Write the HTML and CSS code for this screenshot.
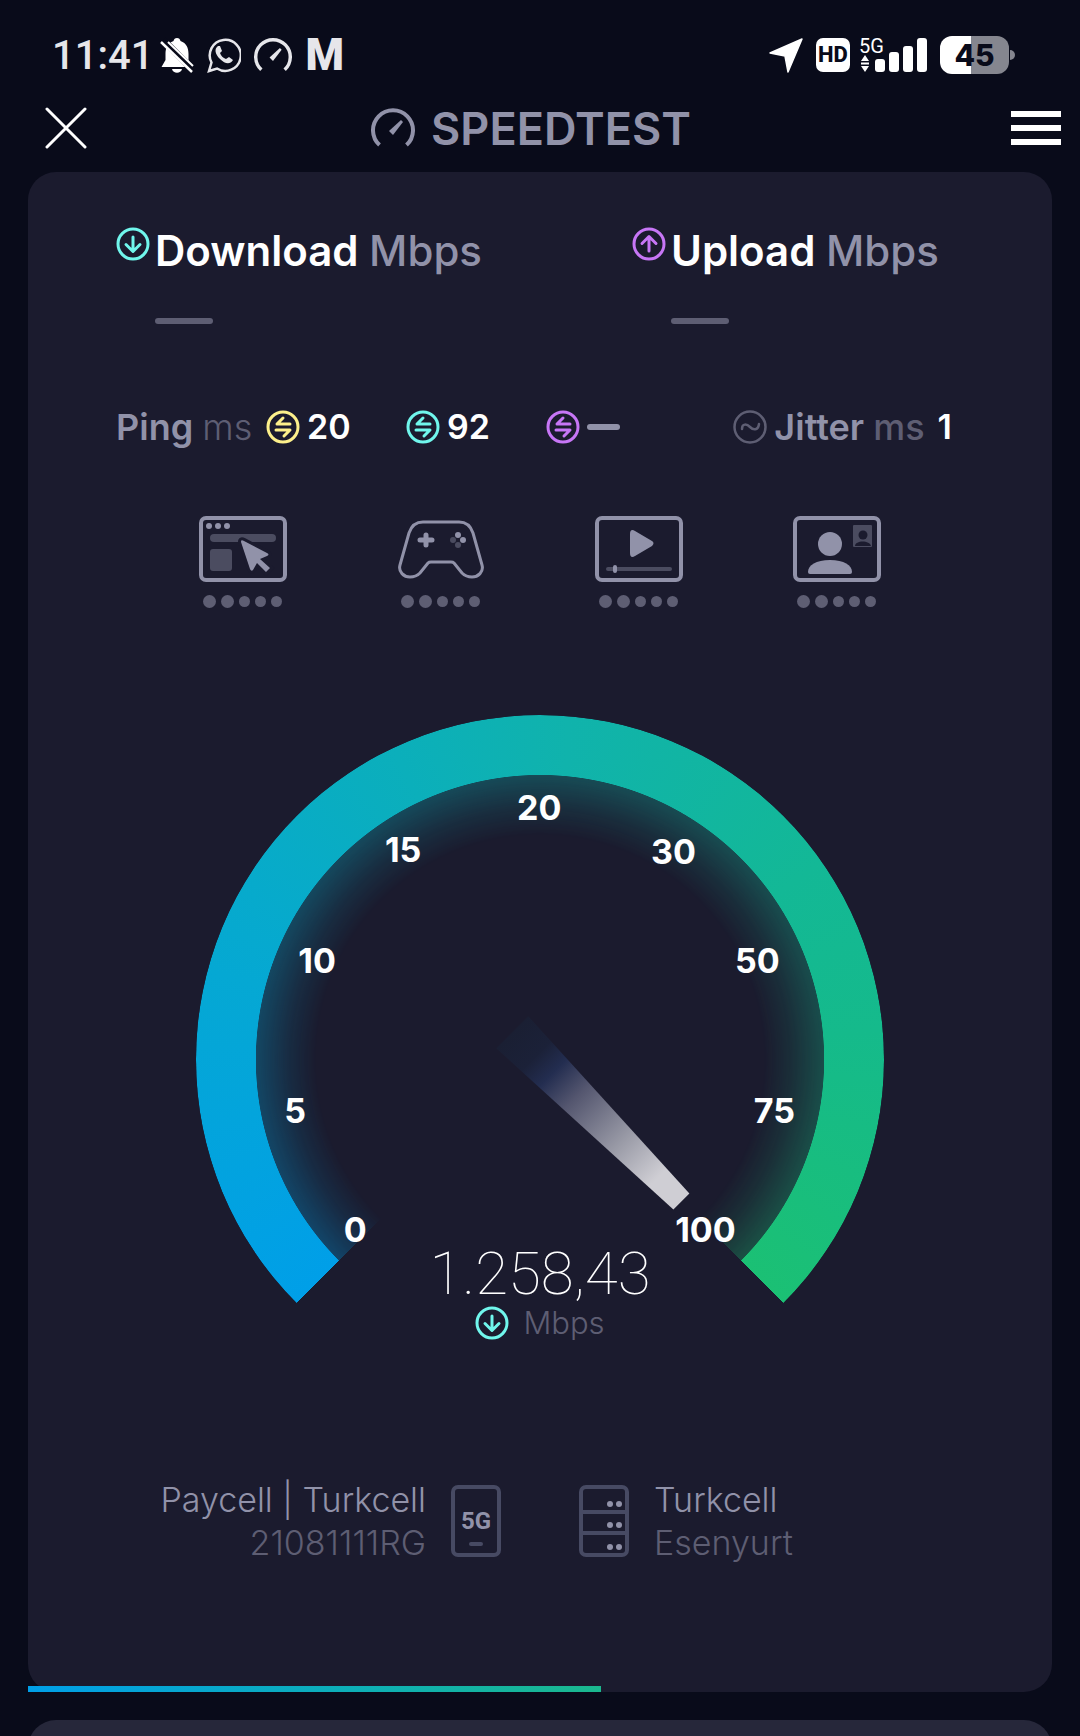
FILE: index.html
```html
<!DOCTYPE html>
<html lang="en">
<head>
    <meta charset="UTF-8">
    <meta name="viewport" content="width=device-width, initial-scale=1.0">
    <title>Speedtest</title>
    <link rel="stylesheet" href="styles.css">
</head>
<body>
    <!-- Shared icons -->
    <svg class="sprite" aria-hidden="true">
        <symbol id="icon-down" viewBox="0 0 34 34">
            <circle cx="17" cy="17" r="15" stroke-width="3"/>
            <path d="M17 10v14M10 17.500l7 7 7-7" stroke-width="3"/>
        </symbol>
        <symbol id="icon-up" viewBox="0 0 34 34">
            <circle cx="17" cy="17" r="15" stroke-width="3"/>
            <path d="M17 24V10M10 16.500l7-7 7 7" stroke-width="3"/>
        </symbol>
        <symbol id="icon-ping" viewBox="0 0 34 34">
            <circle cx="17" cy="17" r="15" stroke-width="3"/>
            <path d="M24 14H11l6-6M10 20h14l-6 6" stroke-width="3"/>
        </symbol>
        <symbol id="icon-jitter" viewBox="0 0 34 34">
            <circle cx="17" cy="17" r="15.500" stroke-width="2.500"/>
            <path d="M9 19c0-6 5-5 8-2s8 4 9-3" stroke-width="2.500"/>
        </symbol>
        <symbol id="icon-gauge" viewBox="0 0 44 40">
            <path d="M8.500 37A20 20 0 1 1 35.500 37" stroke-width="4"/>
            <path d="M18 23l12-11 2 2-10 13z" fill="currentColor" stroke="none"/>
        </symbol>
    </svg>

    <div class="status-bar">
        <div class="status-left">
            <span class="time">11:41</span>
            <svg class="status-icon" viewBox="0 0 34 36">
                <path d="M17 1c2 0 3 1 3.500 3 6 2 8 7 8 13v6l4 7H1.500l4-7v-6c0-6 2-11 8-13C14 2 15 1 17 1z" fill="#fff"/>
                <path d="M12 32h10c-1 5-9 5-10 0z" fill="#fff"/>
                <path d="M3 3l32 32" stroke="#090b1a" stroke-width="7"/>
                <path d="M1 5l31 30" stroke="#fff" stroke-width="2.500"/>
                <path d="M8 5l25 24" stroke="#fff" stroke-width="2"/>
            </svg>
            <svg class="status-icon" viewBox="0 0 34 36">
                <path d="M2 34l2.500-8.500A15.500 15.500 0 1 1 10 31.500z" fill="none" stroke="#e6e6ea" stroke-width="2.500"/>
                <path d="M11 9c-4 3-3 8 2 13 5 5 10 6 13 1l-4-3-3 2c-3-1-5-3-6-6l2-2-2-5z" fill="#e6e6ea"/>
            </svg>
            <svg class="status-icon gauge-icon stroke-icon" viewBox="0 0 44 40"><use href="#icon-gauge"/></svg>
            <span class="m-badge">M</span>
        </div>
        <div class="status-right">
            <svg class="status-icon" viewBox="0 0 34 36">
                <path d="M1 16L33 2 19 35l-3-16z" fill="#fff" stroke="#fff" stroke-width="1.500" stroke-linejoin="round"/>
            </svg>
            <span class="hd-badge">HD</span>
            <svg class="signal" viewBox="0 0 68 36">
                <text x="0" y="16" class="signal-text">5G</text>
                <path d="M6 18l4 6H2zM6 35l4-6H2zM2 25.500h8v2H2z" fill="#fff"/>
                <rect x="16" y="22" width="10" height="13" rx="3"/>
                <rect x="30" y="15" width="10" height="20" rx="3"/>
                <rect x="44" y="9" width="10" height="26" rx="3"/>
                <rect x="58" y="1" width="10" height="34" rx="3"/>
            </svg>
            <span class="battery">45</span>
        </div>
    </div>

    <header class="app-header">
        <button class="icon-btn" aria-label="Close">
            <svg width="42" height="42" viewBox="0 0 42 42"><path d="M2 2l38 38M40 2L2 40"/></svg>
        </button>
        <div class="brand">
            <svg class="stroke-icon" width="44" height="40" viewBox="0 0 44 40"><use href="#icon-gauge"/></svg>
            <span>SPEEDTEST</span>
        </div>
        <button class="icon-btn menu-btn" aria-label="Menu">
            <span></span><span></span><span></span>
        </button>
    </header>

    <main class="card">
        <section class="speeds">
            <div class="speed">
                <svg class="badge cyan"><use href="#icon-down"/></svg>
                <h2>Download <span>Mbps</span></h2>
                <div class="empty-value"></div>
            </div>
            <div class="speed">
                <svg class="badge purple"><use href="#icon-up"/></svg>
                <h2>Upload <span>Mbps</span></h2>
                <div class="empty-value"></div>
            </div>
        </section>

        <section class="latency">
            <div class="label">Ping <span class="unit thin">ms</span></div>
            <div class="stat"><svg class="badge yellow"><use href="#icon-ping"/></svg>20</div>
            <div class="stat"><svg class="badge cyan"><use href="#icon-ping"/></svg>92</div>
            <div class="stat"><svg class="badge purple"><use href="#icon-ping"/></svg><i class="dash"></i></div>
            <div class="stat jitter">
                <svg class="badge dim"><use href="#icon-jitter"/></svg>
                <span class="label">Jitter <span class="unit">ms</span></span>
                <span class="jitter-value">1</span>
            </div>
        </section>

        <section class="activities">
            <div class="activity">
                <svg viewBox="0 0 88 66">
                    <rect class="line" x="2" y="2" width="84" height="62" rx="5"/>
                    <circle cx="10" cy="10" r="3"/><circle cx="19" cy="10" r="3"/><circle cx="28" cy="10" r="3"/>
                    <rect class="faint" x="11" y="18" width="66" height="8" rx="4"/>
                    <rect class="faint" x="11" y="33" width="22" height="22" rx="3"/>
                    <path class="cursor" d="M42 26c0-2 1-2 3-1l23 12c2 1 2 2 0 3l-7 3 10 9-4 4-9-9-4 7c-1 1-2 1-3-1z"/>
                </svg>
                <div class="dots"><i></i><i></i><i></i><i></i><i></i></div>
            </div>
            <div class="activity">
                <svg viewBox="0 0 88 66">
                    <path class="line thin-line" d="M26 6H62C70 6 74 11 76 17L85 49C87 56 81 61 75 61C70 61 67 59 65 57L57 47Q56 46 54 46H34Q32 46 31 47L23 57C21 59 18 61 13 61C7 61 1 56 3 49L12 17C14 11 18 6 26 6Z"/>
                    <path class="plus" d="M29 19v10M23 24h12"/>
                    <circle cx="61" cy="19" r="3"/><circle cx="66" cy="24" r="3"/>
                    <circle class="faint" cx="56" cy="24" r="3"/><circle class="faint" cx="61" cy="29" r="3"/>
                </svg>
                <div class="dots"><i></i><i></i><i></i><i></i><i></i></div>
            </div>
            <div class="activity">
                <svg viewBox="0 0 88 66">
                    <rect class="line" x="2" y="2" width="84" height="62" rx="5"/>
                    <path d="M35 18c0-4 2-5 5-3l17 10c2 1 2 3 0 5L40 40c-3 2-5 1-5-3z"/>
                    <rect class="faint" x="11" y="51" width="66" height="4" rx="2"/>
                    <rect x="18" y="49" width="4" height="8" rx="2"/>
                </svg>
                <div class="dots"><i></i><i></i><i></i><i></i><i></i></div>
            </div>
            <div class="activity">
                <svg viewBox="0 0 88 66">
                    <rect class="line" x="2" y="2" width="84" height="62" rx="5"/>
                    <circle cx="37" cy="28" r="12"/>
                    <path d="M15 56c0-7 8-12 22-12s22 5 22 12q0 2-2 2H17q-2 0-2-2z"/>
                    <rect class="faint" x="60" y="9" width="19" height="22" rx="1"/>
                    <circle class="cut" cx="70" cy="19" r="4.500"/>
                    <path class="cut" d="M62 30c0-6 15-6 16 0z"/>
                </svg>
                <div class="dots"><i></i><i></i><i></i><i></i><i></i></div>
            </div>
        </section>

        <section class="gauge">
            <div class="ring glow"></div>
            <div class="ring"></div>
            <svg class="dial" viewBox="0 0 688 688">
                <defs>
                    <linearGradient id="needle" gradientUnits="userSpaceOnUse" x1="316" y1="317" x2="485" y2="486">
                        <stop offset="0" stop-color="#1a1f33"/>
                        <stop offset="0.140" stop-color="#1b2138"/>
                        <stop offset="0.240" stop-color="#232d50"/>
                        <stop offset="0.380" stop-color="#54566f"/>
                        <stop offset="0.650" stop-color="#9a9ba7"/>
                        <stop offset="0.860" stop-color="#cfced4"/>
                    </linearGradient>
                </defs>
                <path d="M332 301L300 333 477 494 493 478z" fill="url(#needle)"/>
                <text x="159" y="527">0</text>
                <text x="99" y="408">5</text>
                <text x="121" y="258">10</text>
                <text x="207" y="147">15</text>
                <text x="343" y="105">20</text>
                <text x="477" y="149">30</text>
                <text x="561" y="258">50</text>
                <text x="578" y="408">75</text>
                <text x="509" y="527">100</text>
            </svg>
            <div class="reading">1.258,43</div>
            <div class="reading-unit"><svg class="badge cyan"><use href="#icon-down"/></svg>Mbps</div>
        </section>

        <section class="connection">
            <div class="client">
                <div>
                    <div class="name">Paycell | Turkcell</div>
                    <div class="detail">21081111RG</div>
                </div>
                <svg viewBox="0 0 50 72">
                    <rect class="frame" x="2" y="2" width="46" height="68" rx="5"/>
                    <text x="25" y="44">5G</text>
                    <path class="frame" d="M20 59h10" stroke-linecap="round"/>
                </svg>
            </div>
            <div class="server">
                <svg viewBox="0 0 50 72">
                    <rect class="frame" x="2" y="2" width="46" height="68" rx="5"/>
                    <path class="frame" d="M2 27h46M2 48h46"/>
                    <circle cx="31" cy="19" r="3"/><circle cx="40" cy="19" r="3"/>
                    <circle cx="31" cy="40" r="3"/><circle cx="40" cy="40" r="3"/>
                    <circle cx="31" cy="62" r="3"/><circle cx="40" cy="62" r="3"/>
                </svg>
                <div>
                    <div class="name">Turkcell</div>
                    <div class="detail">Esenyurt</div>
                </div>
            </div>
        </section>

        <div class="progress"></div>
    </main>

    <div class="card next-card"></div>
</body>
</html>
```
FILE: styles.css
```css
* {
    box-sizing: border-box;
}
body {
    margin: 0;
    background-color: #090b1a;
    color: white;
    font-family: Inter, "Open Sans", sans-serif;
    height: 100vh;
    overflow: hidden;
}
.sprite {
    position: absolute;
    width: 0;
    height: 0;
}
.stroke-icon, .badge {
    fill: none;
    stroke: currentColor;
}

/* Status bar */
.status-bar {
    display: flex;
    justify-content: space-between;
    align-items: center;
    height: 92px;
    padding: 18px 71px 0 52px;
    font-family: Roboto, sans-serif;
}
.status-left, .status-right {
    display: flex;
    align-items: center;
    gap: 13px;
}
.time {
    color: #e6e6ea;
    font-size: 40px;
    font-weight: 500;
    margin-right: -6px;
}
.status-icon {
    width: 34px;
    height: 36px;
}
.gauge-icon {
    width: 38px;
}
.status-left {
    color: #e6e6ea;
}
.m-badge {
    font-size: 44px;
    line-height: 36px;
    font-weight: 900;
}
.hd-badge {
    width: 34px;
    height: 34px;
    border-radius: 7px;
    background: white;
    color: #090b1a;
    font-size: 22px;
    font-weight: 800;
    line-height: 34px;
    text-align: center;
}
.signal {
    width: 68px;
    height: 36px;
    margin-left: -4px;
    fill: white;
    overflow: visible;
}
.signal-text {
    font-size: 20px;
}
.battery {
    position: relative;
    width: 69px;
    height: 38px;
    border-radius: 12px;
    background: linear-gradient(90deg, #fff 45%, #85868f 45%);
    color: #090b1a;
    font-family: Inter, sans-serif;
    font-size: 30px;
    font-weight: 800;
    line-height: 38px;
    text-align: center;
}
.battery::after {
    content: "";
    position: absolute;
    right: -6px;
    top: 14px;
    width: 5px;
    height: 10px;
    border-radius: 0 5px 5px 0;
    background: #85868f;
}

/* Header */
.app-header {
    display: flex;
    justify-content: space-between;
    align-items: center;
    height: 80px;
    padding: 0 19px 8px 45px;
}
.icon-btn {
    padding: 0;
    border: none;
    background: none;
    cursor: pointer;
    width: 50px;
    text-align: left;
}
.icon-btn svg {
    display: block;
    fill: none;
    stroke: white;
    stroke-width: 3;
    stroke-linecap: round;
}
.menu-btn span {
    display: block;
    height: 6px;
    background: white;
}
.menu-btn span + span {
    margin-top: 8px;
}
.brand {
    display: flex;
    align-items: center;
    gap: 16px;
    margin-right: 44px;
    color: #9192a9;
    font-size: 45px;
    font-weight: 600;
}

/* Main card */
.card {
    position: relative;
    margin: 0 28px;
    padding: 48px 88px 128px;
    border-radius: 28px;
    background: #1b1b2e;
}
.speeds {
    display: grid;
    grid-template-columns: 516px 1fr;
}
.speed {
    display: grid;
    grid-template-columns: 34px auto;
    column-gap: 5px;
    white-space: nowrap;
}
.badge {
    flex: none;
    width: 34px;
    height: 34px;
    stroke-linecap: round;
    stroke-linejoin: round;
}
.speed .badge {
    margin-top: 7px;
}
.cyan {
    color: #70f6ec;
}
.purple {
    color: #c776f6;
}
.yellow {
    color: #fdf08b;
}
.dim {
    color: #5e5e73;
}
h2 {
    margin: 6px 0 0;
    font-size: 42px;
    line-height: 50px;
    font-weight: 600;
}
h2 span {
    color: #9192a9;
    font-weight: 500;
}
.empty-value {
    grid-column: 2;
    width: 58px;
    height: 6px;
    margin-top: 42px;
    border-radius: 3px;
    background: #5e5e73;
}
.latency {
    display: grid;
    grid-template-columns: 150px 140px 140px 1fr auto;
    align-items: center;
    margin-top: 82px;
    padding-right: 12px;
    font-size: 34px;
    line-height: 42px;
    font-weight: 600;
    white-space: nowrap;
}
.label {
    color: #9192a9;
    font-size: 36px;
}
.unit {
    color: #5e5e73;
    font-weight: 500;
}
.thin {
    font-weight: 300;
}
.stat {
    display: flex;
    align-items: center;
    gap: 7px;
}
.dash {
    width: 33px;
    height: 6px;
    border-radius: 3px;
    background: #9192a9;
}
.jitter-value {
    margin-left: 6px;
}

/* Activity icons */
.activities {
    display: grid;
    grid-template-columns: repeat(4, 1fr);
    margin: 68px -12px 0;
    padding: 0 40px;
    justify-items: center;
}
.activity svg {
    display: block;
    width: 88px;
    height: 66px;
    fill: #9192a9;
}
.activity .line {
    fill: none;
    stroke: #9192a9;
    stroke-width: 4;
}
.activity .thin-line {
    stroke-width: 3;
}
.activity .faint {
    fill: #4b4c60;
}
.activity .cut {
    fill: #1b1b2e;
}
.activity .cursor {
    stroke: #1b1b2e;
    stroke-width: 6;
    paint-order: stroke;
}
.activity .plus {
    stroke: #9192a9;
    stroke-width: 5;
    stroke-linecap: round;
}
.dots {
    display: flex;
    align-items: center;
    gap: 5px;
    margin-top: 13px;
    padding-left: 4px;
}
.dots i {
    width: 11px;
    height: 11px;
    border-radius: 50%;
    background: #5e5e73;
}
.dots i:nth-child(-n+2) {
    width: 13px;
    height: 13px;
}

/* Gauge */
.gauge {
    position: relative;
    display: flex;
    flex-direction: column;
    align-items: center;
    justify-content: flex-end;
    width: 81.200%;
    aspect-ratio: 688 / 624;
    margin: 107px auto 0;
}
.ring, .dial {
    position: absolute;
    top: 0;
    left: 0;
    width: 100%;
    aspect-ratio: 1;
}
.ring {
    border-radius: 50%;
    background: conic-gradient(from 225deg, #009fe8, #05a8d3 60deg, #0bafbb 110deg, #10b3ac 140deg, #13b896 190deg, #15ba8b 220deg, #1bc074 270deg, transparent 270deg);
    mask: radial-gradient(closest-side, transparent 82.500%, #000 82.700%);
}
.glow {
    mask: radial-gradient(closest-side, transparent 65%, rgba(0, 0, 0, 0.120) 73%, rgba(0, 0, 0, 0.320) 82.700%, transparent 83%);
}
.dial text {
    fill: white;
    font-size: 34px;
    font-weight: 700;
    text-anchor: middle;
}
.reading {
    position: relative;
    font-family: Roboto, sans-serif;
    font-size: 60px;
    line-height: 60px;
    font-weight: 100;
    margin-bottom: 2px;
}
.reading-unit {
    position: relative;
    display: flex;
    align-items: center;
    gap: 14px;
    color: #5e5e73;
    font-size: 31px;
    line-height: 34px;
    font-weight: 300;
}

/* Client and server */
.connection {
    display: grid;
    grid-template-columns: 1fr 1fr;
    gap: 78px;
    margin-top: 138px;
    font-size: 34px;
    line-height: 43px;
    font-weight: 300;
    white-space: nowrap;
}
.client, .server {
    display: flex;
    align-items: center;
    gap: 25px;
}
.client {
    justify-content: flex-end;
    text-align: right;
}
.connection svg {
    flex: none;
    width: 50px;
    height: 72px;
    fill: #9192a9;
}
.connection text {
    font-family: Roboto, sans-serif;
    font-size: 24px;
    font-weight: 700;
    text-anchor: middle;
}
.connection .frame {
    fill: none;
    stroke: #474a63;
    stroke-width: 4;
}
.name {
    color: #9192a9;
}
.detail {
    color: #5e5e73;
}
.progress {
    position: absolute;
    left: 0;
    bottom: 0;
    width: 56%;
    height: 6px;
    background: linear-gradient(90deg, #009fe8, #0eb0b4 60%, #1bb88e);
}
.next-card {
    height: 200px;
    margin-top: 28px;
    background: #26273a;
}
```
